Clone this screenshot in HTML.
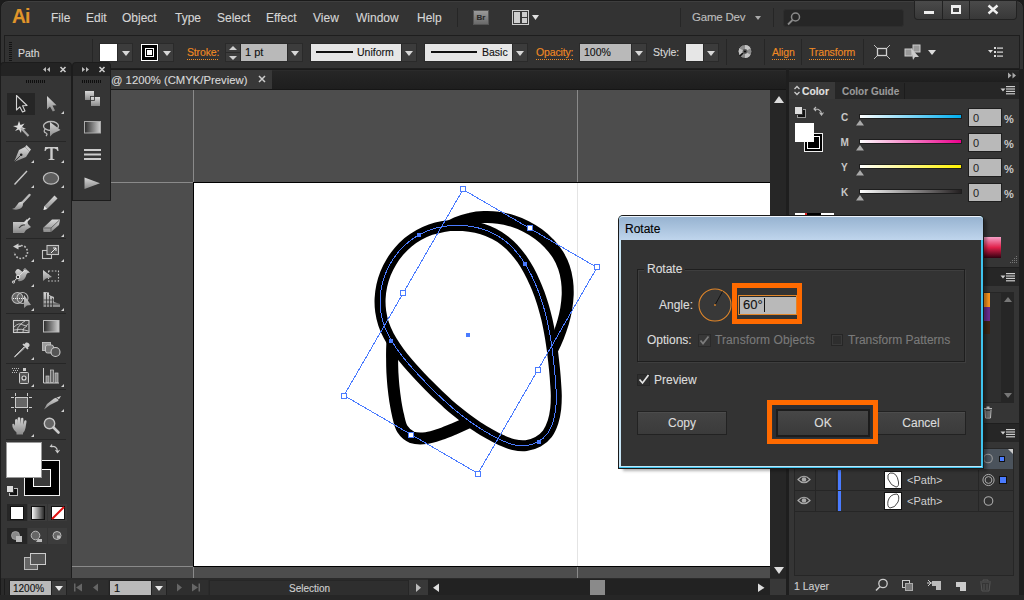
<!DOCTYPE html>
<html><head><meta charset="utf-8">
<style>
*{margin:0;padding:0;box-sizing:border-box}
html,body{width:1024px;height:600px;overflow:hidden;background:#1c1c1c;font-family:"Liberation Sans",sans-serif;-webkit-text-stroke-width:0.12px}
.a{position:absolute}
#win{position:absolute;left:0;top:0;width:1024px;height:600px;background:#333;border-radius:8px 8px 0 0;border:1px solid #1a1a1a;box-shadow:inset 0 1px 0 #3e3e3e}
.menu{color:#d6d6d6;font-size:12px;line-height:12px;top:12px;-webkit-text-stroke:0.12px #d6d6d6}
.ctl{position:absolute;left:4px;top:35px;width:1016px;height:34px;background:#323232;border:1px solid #1e1e1e;border-right-color:#1e1e1e}
.lbl{color:#d8d8d8;font-size:11px}
.olbl{color:#f08a24;font-size:10.5px;line-height:11px;letter-spacing:-0.15px;background:repeating-linear-gradient(90deg,#f08a24 0 1px,transparent 1px 2px) 0 100%/100% 1px no-repeat;padding-bottom:2px}
.sw{background:#f2f2f2}
.dd{background:#3a3a3a;border:1px solid #262626}
.tri{width:0;height:0;border-left:4px solid transparent;border-right:4px solid transparent;border-top:5px solid #d8d8d8}
.sep{width:1px;background:#262626}
</style></head>
<body>
<div id="win"></div>
<!-- Menu bar -->
<div class="a" style="left:12px;top:3px;color:#e0962a;font-weight:bold;font-size:21px;line-height:26px;letter-spacing:-1px;transform:scaleX(0.92);transform-origin:left">Ai</div>
<div class="a menu" style="left:51px">File</div>
<div class="a menu" style="left:86px">Edit</div>
<div class="a menu" style="left:122px">Object</div>
<div class="a menu" style="left:175px">Type</div>
<div class="a menu" style="left:217px">Select</div>
<div class="a menu" style="left:266px">Effect</div>
<div class="a menu" style="left:313px">View</div>
<div class="a menu" style="left:356px">Window</div>
<div class="a menu" style="left:417px">Help</div>
<div class="a sep" style="left:457px;top:8px;height:19px;background:#262626"></div>
<div class="a" style="left:473px;top:10px;width:16px;height:15px;background:linear-gradient(#9a9a9a,#6a6a6a);border:1px solid #555;color:#2a2a2a;font-size:8px;line-height:13px;text-align:center;font-weight:bold">Br</div>
<svg class="a" style="left:511px;top:9px" width="30" height="17">
 <rect x="1.5" y="1.5" width="16" height="14" fill="#3a3a3a" stroke="#cfcfcf" stroke-width="1"/>
 <rect x="3" y="3" width="6" height="11" fill="#cfcfcf"/>
 <rect x="11" y="3" width="5" height="5" fill="#cfcfcf"/>
 <rect x="11" y="9" width="5" height="5" fill="#cfcfcf"/>
 <path d="M21 6 L28 6 L24.5 11 Z" fill="#e0e0e0"/>
</svg>
<div class="a sep" style="left:680px;top:8px;height:19px;background:#262626"></div>
<div class="a" style="left:692px;top:12px;color:#bdbdbd;font-size:11.5px;line-height:11.5px;letter-spacing:-0.2px">Game Dev</div>
<div class="a tri" style="left:755px;top:16px;border-left-width:3px;border-right-width:3px;border-top-width:4px;border-top-color:#aaa"></div>
<div class="a sep" style="left:773px;top:8px;height:19px;background:#262626"></div>
<div class="a" style="left:783px;top:9px;width:121px;height:18px;background:#262626;border:1px solid #2e2e2e;border-radius:3px"></div>
<svg class="a" style="left:786px;top:11px" width="16" height="15"><circle cx="9.5" cy="6" r="4" fill="none" stroke="#8a8a8a" stroke-width="1.5"/><path d="M6.5 9 L2 13.5" stroke="#8a8a8a" stroke-width="1.8"/></svg>
<!-- window buttons -->
<div class="a" style="left:914px;top:0;width:103px;height:20px;background:#222;border-radius:0 0 4px 4px"></div>
<div class="a" style="left:915px;top:1px;width:27px;height:18px;background:linear-gradient(#4a4a4a,#383838);border-radius:0 0 0 3px"></div>
<div class="a" style="left:943px;top:1px;width:26px;height:18px;background:linear-gradient(#4a4a4a,#383838)"></div>
<div class="a" style="left:970px;top:1px;width:46px;height:18px;background:linear-gradient(#4a4a4a,#383838);border-radius:0 0 3px 0"></div>
<div class="a" style="left:924px;top:11px;width:10px;height:3px;background:#eee"></div>
<div class="a" style="left:951px;top:5px;width:10px;height:9px;border:2px solid #eee;border-top-width:3px"></div>
<svg class="a" style="left:987px;top:4px" width="12" height="11"><path d="M1.5 1.5 L10.5 9.5 M10.5 1.5 L1.5 9.5" stroke="#eee" stroke-width="2.4"/></svg>

<!-- Control bar -->
<div class="ctl"></div>
<div class="a" style="left:9px;top:42px;width:3px;height:20px;background:repeating-linear-gradient(#141414 0 1px,transparent 1px 2px)"></div>
<div class="a lbl" style="left:18px;top:47.5px;font-size:10.5px;line-height:10.5px">Path</div>
<div class="a" style="left:92px;top:39px;width:1px;height:26px;background:#262626"></div>
<div class="a" style="left:99px;top:43px;width:34px;height:19px;background:#2a2a2a"></div>
<div class="a" style="left:100px;top:44px;width:17px;height:17px;background:#fff"></div>
<div class="a" style="left:118px;top:44px;width:14px;height:17px;background:#3c3c3c"></div>
<div class="a tri" style="left:122px;top:51px"></div>
<div class="a" style="left:140px;top:43px;width:34px;height:19px;background:#2a2a2a"></div>
<div class="a" style="left:141px;top:44px;width:17px;height:17px;background:#000;border:1px solid #fff"></div>
<div class="a" style="left:145px;top:48px;width:9px;height:9px;border:1px solid #fff"></div>
<div class="a" style="left:147px;top:50px;width:5px;height:5px;background:#fff"></div>
<div class="a" style="left:159px;top:44px;width:14px;height:17px;background:#3c3c3c"></div>
<div class="a tri" style="left:163px;top:51px"></div>
<div class="a olbl" style="left:187px;top:47px">Stroke:</div>
<div class="a" style="left:225px;top:43px;width:78px;height:19px;background:#2a2a2a"></div>
<div class="a" style="left:226px;top:44px;width:14px;height:8px;background:#3c3c3c"></div>
<div class="a" style="left:226px;top:53px;width:14px;height:8px;background:#3c3c3c"></div>
<div class="a" style="left:229px;top:46px;width:0;height:0;border-left:4px solid transparent;border-right:4px solid transparent;border-bottom:4px solid #cfcfcf"></div>
<div class="a" style="left:229px;top:56px;width:0;height:0;border-left:4px solid transparent;border-right:4px solid transparent;border-top:4px solid #cfcfcf"></div>
<div class="a" style="left:241px;top:44px;width:46px;height:17px;background:#b9b9b9"></div>
<div class="a" style="left:245px;top:47px;font-size:11px;line-height:11px;color:#111">1 pt</div>
<div class="a" style="left:288px;top:44px;width:14px;height:17px;background:#3c3c3c"></div>
<div class="a tri" style="left:291px;top:51px"></div>
<div class="a" style="left:310px;top:43px;width:107px;height:19px;background:#2a2a2a"></div>
<div class="a" style="left:311px;top:44px;width:90px;height:17px;background:#e6e6e6"></div>
<div class="a" style="left:316px;top:51px;width:37px;height:2px;background:#111"></div>
<div class="a" style="left:357px;top:47px;font-size:10.5px;line-height:11px;color:#111">Uniform</div>
<div class="a" style="left:402px;top:44px;width:14px;height:17px;background:#3c3c3c"></div>
<div class="a tri" style="left:405px;top:51px"></div>
<div class="a" style="left:424px;top:43px;width:104px;height:19px;background:#2a2a2a"></div>
<div class="a" style="left:425px;top:44px;width:87px;height:17px;background:#e6e6e6"></div>
<div class="a" style="left:431px;top:51px;width:46px;height:2px;background:#111"></div>
<div class="a" style="left:482px;top:47px;font-size:10.5px;line-height:11px;color:#111">Basic</div>
<div class="a" style="left:513px;top:44px;width:14px;height:17px;background:#3c3c3c"></div>
<div class="a tri" style="left:516px;top:51px"></div>
<div class="a olbl" style="left:536px;top:47px">Opacity:</div>
<div class="a" style="left:579px;top:43px;width:68px;height:19px;background:#2a2a2a"></div>
<div class="a" style="left:580px;top:44px;width:51px;height:17px;background:#b9b9b9"></div>
<div class="a" style="left:584px;top:47px;font-size:10.5px;line-height:11px;color:#111">100%</div>
<div class="a" style="left:632px;top:44px;width:14px;height:17px;background:#3c3c3c"></div>
<div class="a tri" style="left:635px;top:51px"></div>
<div class="a lbl" style="left:653px;top:47px;font-size:10.5px;line-height:11px">Style:</div>
<div class="a" style="left:685px;top:43px;width:34px;height:19px;background:#2a2a2a"></div>
<div class="a" style="left:686px;top:44px;width:17px;height:17px;background:#e6e6e6"></div>
<div class="a" style="left:704px;top:44px;width:14px;height:17px;background:#3c3c3c"></div>
<div class="a tri" style="left:707px;top:51px"></div>
<div class="a" style="left:726px;top:39px;width:1px;height:26px;background:#262626"></div>
<svg class="a" style="left:737px;top:44px" width="16" height="16"><circle cx="8" cy="7.5" r="7" fill="#8c8c8c" stroke="#2a2a2a" stroke-width="1"/><path d="M8 7.5 L8 1 A6.5 6.5 0 0 1 13.6 4.3 Z M8 7.5 L13.6 10.7 A6.5 6.5 0 0 1 8 14 Z M8 7.5 L2.4 10.7 A6.5 6.5 0 0 1 2.4 4.3 Z" fill="#c4c4c4"/><circle cx="8" cy="7.5" r="2.4" fill="#555"/><circle cx="8" cy="7.5" r="1.1" fill="#111"/><path d="M3 12 L6 9" stroke="#111" stroke-width="1.6"/></svg>
<div class="a" style="left:764px;top:39px;width:1px;height:26px;background:#262626"></div>
<div class="a olbl" style="left:772px;top:47px">Align</div>
<div class="a" style="left:801px;top:39px;width:1px;height:26px;background:#262626"></div>
<div class="a olbl" style="left:809px;top:47px">Transform</div>
<div class="a" style="left:863px;top:39px;width:1px;height:26px;background:#262626"></div>
<svg class="a" style="left:873px;top:44px" width="18" height="16"><rect x="4.5" y="4.5" width="9" height="7" fill="none" stroke="#d0d0d0" stroke-width="1.3"/><path d="M1 1 L4 4 M17 1 L14 4 M1 15 L4 12 M17 15 L14 12" stroke="#bbb" stroke-width="1"/></svg>
<svg class="a" style="left:904px;top:44px" width="20" height="16"><rect x="1" y="5" width="7" height="7" fill="#999" stroke="#ccc" stroke-width="1"/><rect x="9" y="1" width="7" height="7" fill="#999" stroke="#ccc" stroke-width="1"/><path d="M7 4 L15 13 L11 13 L9 16 Z" fill="#ccc"/></svg>
<div class="a tri" style="left:928px;top:50px;border-top-color:#ddd;border-top-width:5px;border-left-width:4px;border-right-width:4px"></div>
<svg class="a" style="left:988px;top:47px" width="16" height="11"><path d="M0 3 L5 3 L2.5 6 Z" fill="#ddd"/><rect x="6" y="0" width="2" height="2" fill="#ddd"/><rect x="6" y="4" width="2" height="2" fill="#ddd"/><rect x="6" y="8" width="2" height="2" fill="#ddd"/><rect x="9" y="0.5" width="6" height="1.2" fill="#ddd"/><rect x="9" y="4.5" width="6" height="1.2" fill="#ddd"/><rect x="9" y="8.5" width="6" height="1.2" fill="#ddd"/></svg>

<!-- Tab bar -->
<div class="a" style="left:72px;top:69px;width:714px;height:21px;background:linear-gradient(#1a1a1a 0 1px,#2b2b2b 1px 2px,#262626 2px,#1e1e1e 20px,#161616 20px)"></div>
<div class="a" style="left:111px;top:70px;width:161px;height:19px;background:#383838"></div>
<div class="a" style="left:111px;top:75px;font-size:11.3px;line-height:11.3px;color:#d8d8d8;white-space:nowrap">@ 1200% (CMYK/Preview)</div>
<svg class="a" style="left:258px;top:75px" width="8" height="8"><path d="M1 1 L7 7 M7 1 L1 7" stroke="#ccc" stroke-width="1.5"/></svg>
<!-- Canvas -->
<div class="a" style="left:72px;top:90px;width:698px;height:489px;background:#4d4d4d"></div>
<div class="a" style="left:193px;top:90px;width:1px;height:92px;background:#8a8a8a"></div>
<div class="a" style="left:72px;top:182px;width:121px;height:1px;background:#8a8a8a"></div>
<div class="a" style="left:577px;top:90px;width:1px;height:92px;background:#8a8a8a"></div>
<div class="a" style="left:72px;top:566px;width:121px;height:1px;background:#8a8a8a"></div>
<div class="a" style="left:577px;top:567px;width:1px;height:12px;background:#8a8a8a"></div>
<div class="a" style="left:193px;top:567px;width:1px;height:12px;background:#8a8a8a"></div>
<div class="a" style="left:193px;top:182px;width:577px;height:385px;background:#000"></div>
<div class="a" style="left:194px;top:183px;width:576px;height:383px;background:#fff"></div>
<div class="a" style="left:577px;top:183px;width:1px;height:383px;background:#e4e4e4"></div>
<svg class="a" style="left:0;top:0" width="770" height="580">
<path d="M456.5 223.1C460.8 221.2 465.3 219.8 469.9 218.8C474.4 217.7 479.2 217.1 483.9 217.0C488.6 216.8 493.5 217.0 498.2 217.7C503.0 218.3 507.8 219.4 512.4 220.9C517.0 222.3 521.6 224.2 526.0 226.5C530.3 228.7 534.6 231.3 538.5 234.1C542.4 237.0 546.1 240.2 549.3 243.7C552.6 247.1 555.5 250.9 558.0 254.8C560.4 258.7 562.4 262.9 563.9 267.2C565.4 271.5 566.4 276.0 567.0 280.6C567.6 285.1 567.8 289.9 567.7 294.6C567.5 299.3 567.0 304.1 566.2 308.9C565.4 313.6 564.2 318.4 562.9 323.1C561.5 327.7 559.9 332.3 558.1 336.8C556.3 341.3 554.3 345.7 552.1 349.9C549.8 354.1 547.4 358.2 544.7 362.1C542.1 366.1 539.2 369.9 536.1 373.5C533.1 377.1 529.8 380.5 526.4 383.8C523.0 387.1 519.4 390.2 515.7 393.2C512.0 396.2 508.1 399.0 504.2 401.7C500.3 404.4 496.3 407.0 492.3 409.5C488.2 411.9 484.1 414.2 480.0 416.5C475.8 418.7 471.7 420.8 467.5 422.9C463.2 424.9 459.0 426.8 454.5 428.7C450.0 430.6 445.4 432.6 440.7 434.1C435.9 435.7 430.9 437.5 426.1 438.1C421.4 438.6 416.1 438.7 412.1 437.3C408.2 435.8 404.8 432.8 402.4 429.1C400.1 425.5 399.2 420.1 398.1 415.5C396.9 410.8 396.1 405.9 395.3 401.1C394.6 396.3 394.0 391.5 393.5 386.8C393.0 382.0 392.7 377.3 392.4 372.5C392.2 367.8 392.1 363.1 392.1 358.3C392.0 353.6 392.1 348.8 392.3 344.1C392.5 339.3 392.7 334.6 393.2 329.8C393.6 325.1 394.1 320.4 394.9 315.7C395.6 311.0 396.5 306.3 397.6 301.6C398.8 297.0 400.1 292.4 401.7 287.9C403.3 283.3 405.1 278.8 407.2 274.4C409.3 270.0 411.7 265.6 414.3 261.5C417.0 257.3 419.8 253.3 422.9 249.5C426.0 245.7 429.4 242.1 432.9 238.8C436.4 235.6 440.2 232.5 444.1 229.9C448.1 227.3 452.2 225.0 456.5 223.1Z" fill="#fff" stroke="#000" stroke-width="12"/>
<path d="M418.8 235.0C422.5 232.9 426.5 231.2 430.6 229.7C434.7 228.3 439.0 227.3 443.3 226.5C447.6 225.8 452.0 225.4 456.4 225.3C460.7 225.3 465.2 225.6 469.5 226.2C473.8 226.8 478.1 227.7 482.2 229.0C486.3 230.3 490.4 231.9 494.1 233.9C497.9 235.8 501.5 238.1 504.8 240.7C508.2 243.3 511.3 246.2 514.1 249.4C517.0 252.5 519.6 255.9 522.1 259.4C524.6 263.0 526.8 266.7 528.9 270.5C531.0 274.4 532.9 278.3 534.6 282.3C536.4 286.2 538.0 290.3 539.5 294.3C540.9 298.4 542.3 302.5 543.5 306.6C544.7 310.7 545.8 314.9 546.8 319.1C547.8 323.3 548.6 327.5 549.4 331.7C550.2 336.0 550.9 340.2 551.5 344.5C552.2 348.8 552.7 353.0 553.2 357.3C553.7 361.6 554.2 365.9 554.6 370.2C555.0 374.4 555.4 378.7 555.6 383.0C555.9 387.3 556.3 391.5 556.3 395.8C556.3 400.1 556.2 404.5 555.7 408.9C555.2 413.2 554.4 417.9 553.0 422.0C551.6 426.2 549.9 430.4 547.4 433.7C544.9 437.0 541.6 439.8 538.0 441.8C534.5 443.8 530.3 445.1 526.2 445.6C522.1 446.1 517.7 445.6 513.5 444.7C509.4 443.8 505.2 441.8 501.2 440.1C497.2 438.3 493.3 436.2 489.5 434.0C485.7 431.9 482.0 429.7 478.4 427.3C474.7 425.0 471.2 422.5 467.8 420.0C464.3 417.5 460.9 414.8 457.6 412.1C454.3 409.4 451.0 406.6 447.8 403.8C444.6 400.9 441.5 398.0 438.4 395.1C435.3 392.1 432.2 389.0 429.2 386.0C426.1 382.9 423.1 379.8 420.2 376.7C417.2 373.5 414.2 370.3 411.4 367.1C408.5 363.8 405.7 360.5 403.0 357.2C400.3 353.8 397.7 350.3 395.4 346.8C393.0 343.2 390.7 339.6 388.7 335.8C386.7 332.0 384.9 328.1 383.6 324.0C382.3 320.0 381.3 315.7 380.7 311.4C380.1 307.2 379.9 302.8 380.1 298.5C380.3 294.2 380.9 289.9 381.8 285.7C382.7 281.5 384.0 277.3 385.6 273.3C387.2 269.3 389.2 265.4 391.4 261.8C393.6 258.1 396.2 254.6 399.0 251.3C401.8 248.1 404.9 245.0 408.1 242.3C411.4 239.6 415.0 237.1 418.8 235.0Z" fill="#fff" stroke="#000" stroke-width="11"/>
<path d="M418.8 235.0C422.5 232.9 426.5 231.2 430.6 229.7C434.7 228.3 439.0 227.3 443.3 226.5C447.6 225.8 452.0 225.4 456.4 225.3C460.7 225.3 465.2 225.6 469.5 226.2C473.8 226.8 478.1 227.7 482.2 229.0C486.3 230.3 490.4 231.9 494.1 233.9C497.9 235.8 501.5 238.1 504.8 240.7C508.2 243.3 511.3 246.2 514.1 249.4C517.0 252.5 519.6 255.9 522.1 259.4C524.6 263.0 526.8 266.7 528.9 270.5C531.0 274.4 532.9 278.3 534.6 282.3C536.4 286.2 538.0 290.3 539.5 294.3C540.9 298.4 542.3 302.5 543.5 306.6C544.7 310.7 545.8 314.9 546.8 319.1C547.8 323.3 548.6 327.5 549.4 331.7C550.2 336.0 550.9 340.2 551.5 344.5C552.2 348.8 552.7 353.0 553.2 357.3C553.7 361.6 554.2 365.9 554.6 370.2C555.0 374.4 555.4 378.7 555.6 383.0C555.9 387.3 556.3 391.5 556.3 395.8C556.3 400.1 556.2 404.5 555.7 408.9C555.2 413.2 554.4 417.9 553.0 422.0C551.6 426.2 549.9 430.4 547.4 433.7C544.9 437.0 541.6 439.8 538.0 441.8C534.5 443.8 530.3 445.1 526.2 445.6C522.1 446.1 517.7 445.6 513.5 444.7C509.4 443.8 505.2 441.8 501.2 440.1C497.2 438.3 493.3 436.2 489.5 434.0C485.7 431.9 482.0 429.7 478.4 427.3C474.7 425.0 471.2 422.5 467.8 420.0C464.3 417.5 460.9 414.8 457.6 412.1C454.3 409.4 451.0 406.6 447.8 403.8C444.6 400.9 441.5 398.0 438.4 395.1C435.3 392.1 432.2 389.0 429.2 386.0C426.1 382.9 423.1 379.8 420.2 376.7C417.2 373.5 414.2 370.3 411.4 367.1C408.5 363.8 405.7 360.5 403.0 357.2C400.3 353.8 397.7 350.3 395.4 346.8C393.0 343.2 390.7 339.6 388.7 335.8C386.7 332.0 384.9 328.1 383.6 324.0C382.3 320.0 381.3 315.7 380.7 311.4C380.1 307.2 379.9 302.8 380.1 298.5C380.3 294.2 380.9 289.9 381.8 285.7C382.7 281.5 384.0 277.3 385.6 273.3C387.2 269.3 389.2 265.4 391.4 261.8C393.6 258.1 396.2 254.6 399.0 251.3C401.8 248.1 404.9 245.0 408.1 242.3C411.4 239.6 415.0 237.1 418.8 235.0Z" fill="none" stroke="#4a7bff" stroke-width="1" shape-rendering="crispEdges"/>
 <g fill="none" stroke="#4a7bff" stroke-width="1" shape-rendering="crispEdges">
  <path d="M463 189.5 L597 267.5 L478 473.5 L344 395.5 Z"/>
 </g>
 <g fill="#fff" stroke="#4a7bff" stroke-width="1" shape-rendering="crispEdges">
  <rect x="460.5" y="186.5" width="5" height="5"/>
  <rect x="594.5" y="264.5" width="5" height="5"/>
  <rect x="475.5" y="471.5" width="5" height="5"/>
  <rect x="341.5" y="393.5" width="5" height="5"/>
  <rect x="400.5" y="290.5" width="5" height="5"/>
  <rect x="535.5" y="367.5" width="5" height="5"/>
  <rect x="527.5" y="225.5" width="5" height="5"/>
  <rect x="408.5" y="432.5" width="5" height="5"/>
 </g>
 <g fill="#4a7bff" shape-rendering="crispEdges">
  <rect x="417" y="233" width="4" height="4"/>
  <rect x="523" y="262" width="4" height="4"/>
  <rect x="537" y="440" width="4" height="4"/>
  <rect x="389" y="339" width="4" height="4"/>
  <rect x="466" y="333" width="4" height="4"/>
 </g>
</svg>
<!-- v scrollbar -->
<div class="a" style="left:770px;top:90px;width:17px;height:489px;background:#262626"></div>
<div class="a" style="left:774px;top:96px;width:0;height:0;border-left:5px solid transparent;border-right:5px solid transparent;border-bottom:7px solid #ddd"></div>
<div class="a" style="left:774px;top:567px;width:0;height:0;border-left:5px solid transparent;border-right:5px solid transparent;border-top:7px solid #ddd"></div>

<!-- Right dock -->
<div class="a" style="left:786px;top:69px;width:238px;height:531px;background:#1e1e1e"></div>
<div class="a" style="left:789px;top:69px;width:230px;height:13px;background:linear-gradient(#1a1a1a 0 1px,#2b2b2b 1px 2px,#262626 2px,#1e1e1e)"></div>
<svg class="a" style="left:1007px;top:72px" width="10" height="7"><path d="M1 0.5 L4.5 3.5 L1 6.5 Z M5.5 0.5 L9 3.5 L5.5 6.5 Z" fill="#aaa"/></svg>
<!-- Color panel -->
<div class="a" style="left:789px;top:82px;width:230px;height:17px;background:#262626"></div>
<div class="a" style="left:789px;top:82px;width:46px;height:17px;background:#383838"></div>
<div class="a" style="left:835px;top:83px;width:70px;height:16px;background:#262626;border-right:1px solid #1c1c1c"></div>
<svg class="a" style="left:793px;top:85px" width="8" height="11"><path d="M1.5 4 L4 1.5 L6.5 4 M1.5 7 L4 9.5 L6.5 7" stroke="#ccc" stroke-width="1.3" fill="none"/></svg>
<div class="a" style="left:802px;top:86px;font-size:10.3px;line-height:11px;font-weight:bold;color:#e0e0e0">Color</div>
<div class="a" style="left:842px;top:86px;font-size:10px;line-height:11px;font-weight:bold;color:#9a9a9a">Color Guide</div>
<svg class="a" style="left:1000px;top:86px" width="16" height="9"><path d="M0.5 2.5 L5.5 2.5 L3 5.5 Z" fill="#ccc"/><rect x="6" y="0" width="9" height="1.2" fill="#ccc"/><rect x="6" y="2.4" width="9" height="1.2" fill="#ccc"/><rect x="6" y="4.8" width="9" height="1.2" fill="#ccc"/><rect x="6" y="7.2" width="9" height="1.2" fill="#ccc"/></svg>
<div class="a" style="left:789px;top:99px;width:230px;height:168px;background:#353535"></div>
<svg class="a" style="left:789px;top:99px" width="230" height="170">
 <defs>
  <linearGradient id="cC"><stop offset="0" stop-color="#fff"/><stop offset="1" stop-color="#00aeef"/></linearGradient>
  <linearGradient id="cM"><stop offset="0" stop-color="#fff"/><stop offset="1" stop-color="#ec008c"/></linearGradient>
  <linearGradient id="cY"><stop offset="0" stop-color="#fff"/><stop offset="1" stop-color="#fff200"/></linearGradient>
  <linearGradient id="cK"><stop offset="0" stop-color="#fff"/><stop offset="1" stop-color="#231f20"/></linearGradient>
  <linearGradient id="spec" x1="0" y1="0" x2="0" y2="1"><stop offset="0" stop-color="#f7a0c8"/><stop offset="0.5" stop-color="#e0204a"/><stop offset="1" stop-color="#300010"/></linearGradient>
 </defs>
 <!-- small default fill/stroke + swap -->
 <rect x="8.5" y="10.5" width="8" height="8" fill="#111" stroke="#999" stroke-width="1"/>
 <rect x="5.5" y="7.5" width="8" height="8" fill="#ddd" stroke="#333" stroke-width="1"/>
 <path d="M27 8 L25 10 L27 12 M25.2 10 Q32 9.5 32.5 15 M30.5 13.5 L32.5 16 L34.5 13.5" stroke="#bbb" stroke-width="1.1" fill="none"/>
 <!-- fill/stroke -->
 <rect x="15.5" y="34.5" width="18" height="18" fill="#000" stroke="#eee" stroke-width="1"/>
 <rect x="18.5" y="37.5" width="12" height="12" fill="none" stroke="#fff" stroke-width="1"/>
 <rect x="6" y="24" width="19" height="19" fill="#fff"/>
 <g font-family="Liberation Sans" font-size="10" font-weight="bold" fill="#c8c8c8">
  <text x="52" y="22">C</text><text x="51.5" y="47">M</text><text x="52" y="72">Y</text><text x="52" y="97">K</text>
 </g>
 <rect x="70" y="15" width="103" height="5" fill="#1e1e1e"/>
 <rect x="71" y="16" width="101" height="3" fill="url(#cC)"/>
 <rect x="70" y="40" width="103" height="5" fill="#1e1e1e"/>
 <rect x="71" y="41" width="101" height="3" fill="url(#cM)"/>
 <rect x="70" y="65" width="103" height="5" fill="#1e1e1e"/>
 <rect x="71" y="66" width="101" height="3" fill="url(#cY)"/>
 <rect x="70" y="90" width="103" height="5" fill="#1e1e1e"/>
 <rect x="71" y="91" width="101" height="3" fill="url(#cK)"/>
 <g fill="#aaa"><path d="M67 26.5 L71 21 L75 26.5 Z"/><path d="M67 51.5 L71 46 L75 51.5 Z"/><path d="M67 76.5 L71 71 L75 76.5 Z"/><path d="M67 101.5 L71 96 L75 101.5 Z"/></g>
 <g fill="#b9b9b9" stroke="#1e1e1e" stroke-width="1">
  <rect x="179.5" y="9.5" width="33" height="18"/><rect x="179.5" y="34.5" width="33" height="18"/>
  <rect x="179.5" y="59.5" width="33" height="18"/><rect x="179.5" y="84.5" width="33" height="18"/>
 </g>
 <g font-family="Liberation Sans" font-size="11" fill="#222">
  <text x="184" y="23">0</text><text x="184" y="48">0</text><text x="184" y="73">0</text><text x="184" y="98">0</text>
 </g>
 <g font-family="Liberation Sans" font-size="11" font-weight="bold" fill="#c8c8c8">
  <text x="215" y="24">%</text><text x="215" y="49">%</text><text x="215" y="74">%</text><text x="215" y="99">%</text>
 </g>
 <rect x="6" y="114" width="12" height="3" fill="#fff"/><rect x="18" y="114" width="14" height="3" fill="#000"/><rect x="32" y="114" width="13" height="3" fill="#fff"/><rect x="16" y="114" width="2" height="2" fill="#e02020"/>
 <rect x="194" y="138" width="18" height="21" fill="url(#spec)"/>
 <g fill="#777"><rect x="227" y="157" width="1" height="1"/><rect x="225" y="159" width="1" height="1"/><rect x="227" y="159" width="1" height="1"/><rect x="223" y="161" width="1" height="1"/><rect x="225" y="161" width="1" height="1"/><rect x="227" y="161" width="1" height="1"/><rect x="221" y="163" width="1" height="1"/><rect x="223" y="163" width="1" height="1"/><rect x="225" y="163" width="1" height="1"/><rect x="227" y="163" width="1" height="1"/></g>
</svg>
<!-- Swatches panel -->
<div class="a" style="left:789px;top:268px;width:230px;height:18px;background:#262626"></div>
<svg class="a" style="left:1000px;top:273px" width="16" height="9"><path d="M0.5 2.5 L5.5 2.5 L3 5.5 Z" fill="#ccc"/><rect x="6" y="0" width="9" height="1.2" fill="#ccc"/><rect x="6" y="2.4" width="9" height="1.2" fill="#ccc"/><rect x="6" y="4.8" width="9" height="1.2" fill="#ccc"/><rect x="6" y="7.2" width="9" height="1.2" fill="#ccc"/></svg>
<div class="a" style="left:789px;top:286px;width:230px;height:137px;background:#353535"></div>
<div class="a" style="left:794px;top:292px;width:220px;height:111px;background:#2e2e2e;border:1px solid #262626"></div>
<div class="a" style="left:984px;top:293px;width:6px;height:14px;background:#f7941d"></div>
<div class="a" style="left:984px;top:307px;width:6px;height:14px;background:#6a2c91"></div>
<div class="a" style="left:984px;top:321px;width:6px;height:13px;background:#3c2415"></div>
<div class="a" style="left:1001px;top:293px;width:12px;height:109px;background:#262626"></div>
<div class="a" style="left:1004px;top:297px;width:0;height:0;border-left:4px solid transparent;border-right:4px solid transparent;border-bottom:5px solid #777"></div>
<div class="a" style="left:1004px;top:393px;width:0;height:0;border-left:4px solid transparent;border-right:4px solid transparent;border-top:5px solid #777"></div>
<svg class="a" style="left:983px;top:406px" width="10" height="13"><rect x="1" y="2" width="8" height="1.3" fill="#bbb"/><rect x="3.5" y="0.5" width="3" height="1.5" fill="#bbb"/><path d="M2 4 L2.5 12 L7.5 12 L8 4" fill="none" stroke="#bbb" stroke-width="1"/><path d="M4 5 L4 11 M6 5 L6 11" stroke="#bbb" stroke-width="0.8"/></svg>
<!-- Layers panel -->
<div class="a" style="left:789px;top:424px;width:230px;height:18px;background:#262626"></div>
<svg class="a" style="left:1000px;top:429px" width="16" height="9"><path d="M0.5 2.5 L5.5 2.5 L3 5.5 Z" fill="#ccc"/><rect x="6" y="0" width="9" height="1.2" fill="#ccc"/><rect x="6" y="2.4" width="9" height="1.2" fill="#ccc"/><rect x="6" y="4.8" width="9" height="1.2" fill="#ccc"/><rect x="6" y="7.2" width="9" height="1.2" fill="#ccc"/></svg>
<div class="a" style="left:789px;top:442px;width:230px;height:153px;background:#353535"></div>
<div class="a" style="left:794px;top:448px;width:220px;height:128px;background:#323232;border:1px solid #262626"></div>
<div class="a" style="left:795px;top:449px;width:218px;height:20px;background:#4b535c"></div>
<div class="a" style="left:1008px;top:449px;width:0;height:0;border-left:5px solid transparent;border-top:5px solid #ccc"></div>
<svg class="a" style="left:794px;top:448px" width="222" height="130">
 <g fill="none" stroke="#262626" stroke-width="1">
  <path d="M1 42.5 L219 42.5 M1 63.5 L219 63.5"/>
  <path d="M21.5 22 L21.5 63 M42.5 22 L42.5 63 M184.5 22 L184.5 63"/>
 </g>
 <circle cx="194" cy="10.5" r="4.3" fill="none" stroke="#999" stroke-width="1.1"/>
 <rect x="205.5" y="8.5" width="5" height="5" fill="#4a7bff" stroke="#111" stroke-width="1"/>
 <rect x="44" y="22" width="3" height="20" fill="#4a7bff"/>
 <rect x="44" y="43" width="3" height="20" fill="#4a7bff"/>
 <g fill="none" stroke="#aaa" stroke-width="1.2">
  <path d="M4 31.5 Q10 25 16 31.5 Q10 38 4 31.5 Z"/><path d="M4 52.5 Q10 46 16 52.5 Q10 59 4 52.5 Z"/>
 </g>
 <circle cx="10" cy="31.5" r="2.3" fill="#aaa"/><circle cx="10" cy="52.5" r="2.3" fill="#aaa"/>
 <rect x="90.5" y="23.5" width="17" height="17" fill="#fff" stroke="#111" stroke-width="1"/>
 <rect x="90.5" y="44.5" width="17" height="17" fill="#fff" stroke="#111" stroke-width="1"/>
 <path d="M96 25 Q103 24 104.5 34 Q105 39 102 39 Q97 38 94 31 Q93 26 96 25 Z" fill="none" stroke="#333" stroke-width="0.9"/>
 <path d="M103 46 Q106 48 104 54 Q101 60 96 60 Q93 59 94 53 Q96 46 103 46 Z" fill="none" stroke="#333" stroke-width="0.9"/>
 <g font-family="Liberation Sans" font-size="11" fill="#d0d0d0"><text x="113" y="35.5">&lt;Path&gt;</text><text x="113" y="56.5">&lt;Path&gt;</text></g>
 <circle cx="194.5" cy="32" r="5.6" fill="none" stroke="#aaa" stroke-width="1"/>
 <circle cx="194.5" cy="32" r="3.4" fill="none" stroke="#aaa" stroke-width="1"/>
 <rect x="205.5" y="28.5" width="7" height="7" fill="#4a7bff" stroke="#111" stroke-width="1"/>
 <circle cx="194.5" cy="53" r="4.3" fill="none" stroke="#aaa" stroke-width="1.1"/>
</svg>
<div class="a" style="left:794px;top:581px;font-size:10.5px;line-height:10.5px;color:#d0d0d0">1 Layer</div>
<svg class="a" style="left:874px;top:578px" width="120" height="15">
 <circle cx="9" cy="5.5" r="4.2" fill="none" stroke="#ccc" stroke-width="1.3"/><path d="M6 8.5 L2 12.5" stroke="#ccc" stroke-width="1.6"/>
 <rect x="28.5" y="2.5" width="7" height="7" fill="none" stroke="#ccc" stroke-width="1"/><rect x="31.5" y="5.5" width="7" height="7" fill="#777" stroke="#aaa" stroke-width="1"/>
 <path d="M54 2 L57 5 L54 8 M53 5 L60 5" stroke="#ccc" stroke-width="1" fill="none"/><path d="M58 3 L67 3 L67 12 L62 12 L62 8 L58 8 Z" fill="#bbb"/>
 <path d="M82 4 L92 4 L92 13 L86 13 L86 9 L82 9 Z" fill="#ccc"/>
 <g stroke="#555" fill="none" stroke-width="1"><path d="M106 4 L117 4 M109 3 L109 2 L114 2 L114 3 M107 5 L108 13 L115 13 L116 5 M110 6 L110 12 M113 6 L113 12"/></g>
</svg>

<!-- Tools panel -->
<div class="a" style="left:0;top:62px;width:72px;height:517px;background:#1c1c1c;border-radius:4px 4px 0 0"></div>
<div class="a" style="left:1px;top:63px;width:70px;height:13px;background:#232323;border-radius:3px 3px 0 0"></div>
<div class="a" style="left:1px;top:76px;width:70px;height:502px;background:#353535"></div>
<div class="a" style="left:72px;top:62px;width:39px;height:139px;background:#1c1c1c;border-radius:4px 4px 0 0"></div>
<div class="a" style="left:73px;top:63px;width:37px;height:13px;background:#232323;border-radius:3px 3px 0 0"></div>
<div class="a" style="left:73px;top:76px;width:37px;height:124px;background:#353535"></div>
<div class="a" style="left:7px;top:93px;width:28px;height:22px;background:#262626"></div>
<svg class="a" style="left:0;top:0" width="115" height="580">
 <defs>
  <linearGradient id="ig" x1="0" y1="0" x2="0" y2="1"><stop offset="0" stop-color="#d8d8d8"/><stop offset="1" stop-color="#8a8a8a"/></linearGradient>
  <linearGradient id="gr" x1="0" y1="0" x2="1" y2="0"><stop offset="0" stop-color="#2a2a2a"/><stop offset="1" stop-color="#d0d0d0"/></linearGradient>
  <linearGradient id="gr2" x1="0" y1="0" x2="1" y2="0"><stop offset="0" stop-color="#222"/><stop offset="1" stop-color="#fff"/></linearGradient>
 </defs>
 <!-- header icons -->
 <path d="M46 67 L43 69.5 L46 72 Z M50 67 L47 69.5 L50 72 Z" fill="#bbb"/>
 <path d="M60.5 67 L65.5 72 M65.5 67 L60.5 72" stroke="#ccc" stroke-width="1.6"/>
 <path d="M82 67 L85 69.5 L82 72 Z M86 67 L89 69.5 L86 72 Z" fill="#bbb"/>
 <path d="M99.5 67 L104.5 72 M104.5 67 L99.5 72" stroke="#ccc" stroke-width="1.6"/>
 <!-- grips -->
 <g fill="#111">
  <rect x="26" y="80" width="19" height="3" fill="url(#grip)"/>
 </g>
 <pattern id="gp" width="2" height="3" patternUnits="userSpaceOnUse"><rect width="1" height="3" fill="#0e0e0e"/></pattern>
 <rect x="26" y="80" width="19" height="3" fill="url(#gp)"/>
 <rect x="82" y="80" width="19" height="3" fill="url(#gp)"/>
 <!-- separators -->
 <g fill="#262626">
  <rect x="6" y="141" width="60" height="1"/><rect x="6" y="238" width="60" height="1"/>
  <rect x="6" y="313" width="60" height="1"/><rect x="6" y="363" width="60" height="1"/>
  <rect x="6" y="389" width="60" height="1"/><rect x="6" y="439" width="60" height="1"/>
 </g>
 <!-- small corner triangles -->
 <g fill="#d0d0d0">
  <path d="M64 111 L64 114 L61 114 Z"/>
  <path d="M34 160 L34 163 L31 163 Z"/><path d="M64 160 L64 163 L61 163 Z"/>
  <path d="M34 185 L34 188 L31 188 Z"/><path d="M64 185 L64 188 L61 188 Z"/>
  <path d="M64 210 L64 213 L61 213 Z"/><path d="M64 234 L64 237 L61 237 Z"/>
  <path d="M34 259 L34 262 L31 262 Z"/><path d="M64 259 L64 262 L61 262 Z"/>
  <path d="M34 284 L34 287 L31 287 Z"/><path d="M34 308 L34 311 L31 311 Z"/><path d="M64 308 L64 311 L61 311 Z"/>
  <path d="M34 357 L34 360 L31 360 Z"/>
  <path d="M34 384 L34 387 L31 387 Z"/><path d="M64 384 L64 387 L61 387 Z"/>
  <path d="M64 409 L64 412 L61 412 Z"/><path d="M34 434 L34 437 L31 437 Z"/>
 </g>
 <!-- selection (outline arrow) -->
 <path d="M16.5 95.5 L16.5 110 L19.8 106.8 L22.5 112 L25 111 L22.6 105.8 L27 105.5 Z" fill="#262626" stroke="#d4d4d4" stroke-width="1.1" stroke-linejoin="round"/>
 <!-- direct selection -->
 <path d="M47 96 L47 109.5 L50 106.5 L52.8 111.5 L55 110.5 L52.5 105.5 L56.5 105.2 Z" fill="url(#ig)"/>
 <!-- magic wand -->
 <path d="M19 121 L20.5 125 L24.5 123.5 L22 127 L26 129 L21.5 129.5 L21 133 L19 129.5 L15 131 L17.5 128 L13 126 L17.5 125.5 Z" fill="#ddd"/>
 <path d="M21 128 L28.5 136" stroke="#aaa" stroke-width="2"/>
 <!-- lasso -->
 <ellipse cx="51" cy="126" rx="7.5" ry="4.5" fill="none" stroke="#bbb" stroke-width="1.3"/>
 <path d="M45 129 Q43 132 46 133 Q48 134 46 136" fill="none" stroke="#bbb" stroke-width="1.2"/>
 <path d="M50 122 L50 136.5 L53 133.5 L60.5 130 Z" fill="url(#ig)"/>
 <!-- pen -->
 <path d="M25 147 L29.5 151.5 L26 157 L14 162 L19 150 Z" fill="url(#ig)"/>
 <path d="M26.5 145 L31 149.5 L29.5 151.5 L25 147 Z" fill="#ccc"/>
 <path d="M14 162 L20.5 155.5" stroke="#333" stroke-width="0.9"/>
 <circle cx="21.2" cy="154.8" r="1.3" fill="#222"/>
 <!-- T -->
 <path d="M45 147 L58 147 L58.5 151 L57.5 151 Q57 148.5 54.5 148.5 L52.7 148.5 L52.7 158.8 L54.5 159.2 L54.5 160 L48.5 160 L48.5 159.2 L50.3 158.8 L50.3 148.5 L48.5 148.5 Q46 148.5 45.5 151 L44.5 151 Z" fill="#ccc"/>
 <!-- line -->
 <path d="M14.5 184.5 L27 171" stroke="#c8c8c8" stroke-width="1.4"/>
 <!-- ellipse -->
 <ellipse cx="51" cy="178.3" rx="7.6" ry="5.8" fill="#5e5e5e" stroke="#c0c0c0" stroke-width="1.2"/>
 <!-- brush -->
 <path d="M29.5 195 L22 203" stroke="#bbb" stroke-width="2.4" stroke-linecap="round"/>
 <path d="M22.5 202 Q19 201 17 205 Q15.5 208 12 209 Q17 210.5 20.5 208.5 Q24 206 22.5 202 Z" fill="url(#ig)"/>
 <!-- pencil -->
 <path d="M54.5 195.5 L57.5 198.5 L47 209 L43.5 210 L44.5 206 Z" fill="url(#ig)"/>
 <path d="M43.5 210 L44.5 206 L47 209 Z" fill="#eee"/>
 <!-- blob brush -->
 <path d="M13 222 L24 222 L27 219 L28 224 L31 227 L26 230 L24 233 L13 233 Z" fill="url(#ig)"/>
 <path d="M30 218 L23 225" stroke="#ddd" stroke-width="1.6"/>
 <path d="M19 228 Q22 224 25 225" stroke="#444" stroke-width="1.2" fill="none"/>
 <!-- eraser -->
 <path d="M43 228 L52 219.5 L60 219.5 L59 225 L51 232 L43.5 232 Z" fill="url(#ig)"/>
 <path d="M43 228 L51 228 L59.5 220 M51 228 L51 232" stroke="#555" stroke-width="0.8" fill="none"/>
 <!-- rotate -->
 <path d="M21 245.5 A6.5 6.5 0 1 1 14.5 252" fill="none" stroke="#bbb" stroke-width="1.6" stroke-dasharray="1.8 1.5"/>
 <path d="M13 246.5 L18.5 243.5 L18.5 249.5 Z" fill="#ccc"/><path d="M18 246.5 L21 246" stroke="#ccc" stroke-width="1.4"/>
 <!-- scale -->
 <rect x="42.5" y="250.5" width="9" height="8" fill="none" stroke="#c4c4c4" stroke-width="1.1"/>
 <rect x="47" y="245.5" width="11.5" height="9" fill="#555" stroke="#c4c4c4" stroke-width="1.1"/>
 <path d="M51 253 L56 248 M53 248 L56 248 L56 251" stroke="#eee" stroke-width="1" fill="none"/>
 <!-- warp/puppet -->
 <path d="M15 272 Q17 267 20 270 Q23 273 24 271 Q27 268 30 273 Q27 272 26 276 Q24 282 18 281 Q20 277 17 276 Z" fill="url(#ig)"/>
 <path d="M13 282.5 L18 277 L25 270" stroke="#ddd" stroke-width="1" fill="none"/>
 <circle cx="18" cy="277" r="1.8" fill="#333" stroke="#eee" stroke-width="1"/>
 <circle cx="13.5" cy="282" r="1.2" fill="none" stroke="#ddd" stroke-width="0.8"/>
 <circle cx="25" cy="270" r="1.2" fill="none" stroke="#ddd" stroke-width="0.8"/>
 <!-- free transform -->
 <rect x="48.5" y="271" width="10" height="10" fill="none" stroke="#c4c4c4" stroke-width="1.1" stroke-dasharray="1.6 1.6"/>
 <path d="M43 270 L43 281 L46 278.5 L52 277 Z" fill="url(#ig)"/>
 <!-- shape builder -->
 <circle cx="17.5" cy="298" r="5.5" fill="#666" stroke="#bbb" stroke-width="1.1"/>
 <circle cx="22.5" cy="298" r="5.5" fill="none" stroke="#bbb" stroke-width="1.1"/>
 <path d="M13 298.5 L25 298.5" stroke="#eee" stroke-width="1" stroke-dasharray="1 1"/>
 <path d="M24 295 L24 308 L27 305.5 L31 305 Z" fill="url(#ig)"/>
 <!-- perspective grid -->
 <path d="M43.5 292 L43.5 307 L60 307 L60 304 L54 302 L54 297 L49 295 L49 292.5 Z" fill="url(#ig)"/>
 <path d="M46.5 293 L46.5 307 M49.5 296 L49.5 307 M52.5 298 L52.5 307 M43.5 300 L54 300 M43.5 304 L60 304" stroke="#333" stroke-width="0.8"/>
 <!-- mesh -->
 <rect x="13.5" y="320.5" width="15.5" height="12" fill="#444" stroke="#ccc" stroke-width="1.1"/>
 <path d="M14 327 Q19 322 23 325 Q26 327 28.5 324 M17 332 Q17 327 21 324 Q23 322 25 321 M14 330 Q21 328 28.5 331 M23 332 Q22 328 27 326" stroke="#ccc" stroke-width="0.9" fill="none"/>
 <!-- gradient -->
 <rect x="43.5" y="320.5" width="15.5" height="11.5" fill="url(#gr)" stroke="#bbb" stroke-width="1"/>
 <!-- eyedropper -->
 <path d="M27 342.5 Q30 343 29.5 346 L27 348.5 L23.5 345 L26 342.5 Z" fill="#ccc"/>
 <path d="M23 344 L28 349" stroke="#ccc" stroke-width="1.6"/>
 <path d="M24 347 L16 355 L14.5 357 L16.5 355.5 L24.5 348 Z" fill="#777" stroke="#ccc" stroke-width="0.9"/>
 <!-- blend -->
 <rect x="42.5" y="342.5" width="8" height="8" fill="#9a9a9a" stroke="#ccc" stroke-width="0.8"/>
 <rect x="45.5" y="345" width="8" height="8" rx="2" fill="#777" stroke="#ccc" stroke-width="0.9"/>
 <circle cx="55.5" cy="352" r="4.5" fill="#555" stroke="#ccc" stroke-width="1.1"/>
 <!-- symbol sprayer -->
 <g fill="#bbb"><rect x="12" y="368" width="1" height="1"/><rect x="14" y="368" width="1" height="1"/><rect x="16" y="368" width="1" height="1"/><rect x="18" y="368" width="1" height="1"/><rect x="13" y="370" width="1" height="1"/><rect x="15" y="370" width="1" height="1"/><rect x="17" y="370" width="1" height="1"/><rect x="12" y="372" width="1" height="1"/><rect x="14" y="372" width="1" height="1"/><rect x="16" y="372" width="1" height="1"/></g>
 <rect x="23" y="368" width="3" height="3" fill="#ccc"/>
 <rect x="19.5" y="372.5" width="9" height="11" rx="1" fill="#555" stroke="#ccc" stroke-width="1"/>
 <circle cx="24" cy="378" r="2" fill="#333" stroke="#ddd" stroke-width="1.1"/>
 <!-- column graph -->
 <path d="M43.5 368 L43.5 383 L59 383" stroke="#ccc" stroke-width="1" fill="none"/>
 <rect x="46" y="376" width="3" height="6.5" fill="#888" stroke="#ccc" stroke-width="0.7"/>
 <rect x="50.5" y="370" width="3" height="12.5" fill="#666" stroke="#ccc" stroke-width="0.7"/>
 <rect x="55" y="373" width="3" height="9.5" fill="#888" stroke="#ccc" stroke-width="0.7"/>
 <!-- artboard -->
 <rect x="15.5" y="397.5" width="12" height="10" fill="#666" stroke="#ccc" stroke-width="1"/>
 <path d="M11 397.5 L14 397.5 M29 397.5 L32 397.5 M11 407.5 L14 407.5 M29 407.5 L32 407.5 M15.5 393 L15.5 396 M27.5 393 L27.5 396 M15.5 409 L15.5 412 M27.5 409 L27.5 412" stroke="#ccc" stroke-width="1"/>
 <!-- slice -->
 <path d="M61 396 L58 401 L50 405 L44 409.5 L47 404 L54 398.5 Z" fill="url(#ig)"/>
 <path d="M56 397.5 L60 400.5" stroke="#333" stroke-width="0.8"/>
 <!-- hand -->
 <path d="M15 426 L15 420.5 Q15 419 16.3 419 Q17.5 419 17.5 420.5 L17.5 424 L17.7 418.5 Q17.7 417.2 19 417.2 Q20.3 417.2 20.3 418.5 L20.5 424 L21 419 Q21 417.8 22.2 417.8 Q23.4 417.8 23.4 419 L23.4 425 L24.3 421 Q24.6 420 25.7 420.2 Q26.8 420.5 26.5 421.8 L25.5 428 Q25 431 23 433 L23 434.5 L16.5 434.5 L16.5 432.5 Q13.5 430 12.5 427 L12.3 424.5 Q12.5 423.5 13.5 423.7 Q14.7 424 15 426 Z" fill="url(#ig)"/>
 <!-- zoom -->
 <circle cx="49.5" cy="423.5" r="5.2" fill="#666" stroke="#c8c8c8" stroke-width="1.4"/>
 <path d="M53.5 427.5 L58.5 432.5" stroke="#ccc" stroke-width="2.6" stroke-linecap="round"/>
 <!-- fill/stroke -->
 <rect x="24.5" y="460.5" width="35" height="35" fill="#000" stroke="#eee" stroke-width="1"/>
 <rect x="33.5" y="469.5" width="17" height="17" fill="#3a3a3a" stroke="#fff" stroke-width="1"/>
 <rect x="6.5" y="442.5" width="35" height="35" fill="#fff" stroke="#9a9a9a" stroke-width="1"/>
 <path d="M52 444.5 L50.5 446.5 L52.5 447 M51 446.5 Q57 445.5 57.5 451.5 M55.5 450 L57.5 452.5 L59.5 450" stroke="#ccc" stroke-width="1.1" fill="none"/>
 <rect x="9.5" y="488.5" width="8" height="7" fill="#111" stroke="#bbb" stroke-width="1"/>
 <rect x="6.5" y="485.5" width="7" height="7" fill="#ddd" stroke="#333" stroke-width="1"/>
 <!-- color mode buttons -->
 <rect x="7" y="504" width="20" height="17" fill="#262626"/>
 <rect x="28" y="504" width="19" height="17" fill="#3c3c3c"/>
 <rect x="48" y="504" width="19" height="17" fill="#3c3c3c"/>
 <rect x="10.5" y="506.5" width="13" height="13" fill="#fff" stroke="#111" stroke-width="1"/>
 <rect x="31.5" y="506.5" width="13" height="13" fill="url(#gr2)" stroke="#111" stroke-width="1" transform="scale(-1,1) translate(-76,0)"/>
 <rect x="51.5" y="506.5" width="13" height="13" fill="#fff" stroke="#111" stroke-width="1"/>
 <path d="M52 519 L64 507" stroke="#e01010" stroke-width="2"/>
 <!-- draw modes -->
 <rect x="7" y="528" width="20" height="16" fill="#262626"/>
 <rect x="28" y="528" width="19" height="16" fill="#3c3c3c"/>
 <rect x="48" y="528" width="19" height="16" fill="#3c3c3c"/>
 <circle cx="15.5" cy="535.5" r="4" fill="#888" stroke="#aaa" stroke-width="0.8"/>
 <rect x="16" y="536" width="6" height="6" fill="#bbb"/>
 <circle cx="35.5" cy="535.5" r="4.3" fill="#666" stroke="#bbb" stroke-width="1"/>
 <path d="M38 539 L42 539 L42 542 L36 542 Z" fill="#bbb"/>
 <circle cx="57" cy="535.5" r="4" fill="#666" stroke="#bbb" stroke-width="1"/>
 <rect x="57" y="535.5" width="3" height="3" fill="#bbb"/>
 <!-- screen mode -->
 <rect x="24.5" y="557.5" width="13" height="12" fill="#666" stroke="#bbb" stroke-width="1"/>
 <rect x="30.5" y="553.5" width="15" height="11" fill="#555" stroke="#ccc" stroke-width="1"/>
 <!-- panel 2 icons -->
 <rect x="85" y="91" width="9" height="9" fill="url(#ig)"/>
 <rect x="91" y="97" width="9" height="9" fill="url(#ig)"/>
 <rect x="90.5" y="96.5" width="4" height="4" fill="none" stroke="#333" stroke-width="0.8"/>
 <rect x="84.5" y="121.5" width="16" height="11.5" fill="url(#gr)" stroke="#aaa" stroke-width="1"/>
 <rect x="84" y="149" width="17" height="2" fill="#ccc"/>
 <rect x="84" y="153.5" width="17" height="2" fill="#ccc"/>
 <rect x="84" y="158" width="17" height="2" fill="#ccc"/>
 <path d="M84.5 177.5 L84.5 189 L100 183.3 Z" fill="url(#ig)"/>
</svg>

<!-- Dialog -->
<div class="a" style="left:618px;top:215px;width:366px;height:254px;background:#1a1a1a;border-radius:5px 5px 0 0;box-shadow:4px 3px 3px -1px rgba(0,0,0,0.3)"></div>
<div class="a" style="left:619px;top:216px;width:364px;height:252px;background:#3fc3ee;border-radius:4px 4px 0 0"></div>
<div class="a" style="left:619px;top:240px;width:2px;height:227px;background:#c9e6f7"></div>
<div class="a" style="left:621px;top:466px;width:361px;height:1px;background:#bfe6f8"></div>
<div class="a" style="left:619px;top:216px;width:364px;height:24px;background:linear-gradient(#97b3d1,#bfd5ec);border-radius:4px 4px 0 0;border-top:1px solid #eef4fb"></div>
<div class="a" style="left:621px;top:240px;width:360px;height:226px;background:#333"></div>
<div class="a" style="left:625px;top:222px;font-size:12px;line-height:14px;color:#000">Rotate</div>
<div class="a" style="left:637px;top:269px;width:328px;height:93px;border:1px solid #1e1e1e;box-shadow:1px 1px 0 #3e3e3e inset, 1px 1px 0 #3e3e3e"></div>
<div class="a" style="left:644px;top:262px;padding:0 3px;background:#333;font-size:12px;line-height:14px;color:#dcdcdc">Rotate</div>
<div class="a" style="left:659px;top:298px;font-size:12px;line-height:14px;color:#dcdcdc">Angle:</div>
<svg class="a" style="left:697px;top:287px" width="36" height="36"><circle cx="18" cy="18" r="16" fill="#383838" stroke="#e0862a" stroke-width="1.1"/><path d="M18 18 L25.5 4.5" stroke="#111" stroke-width="1"/><circle cx="18" cy="18" r="0.9" fill="#e0862a"/></svg>
<div class="a" style="left:732px;top:283px;width:70px;height:41px;border:5.5px solid #ff6a00"></div>
<div class="a" style="left:738px;top:295px;width:59px;height:20px;background:#b9b9b9;border:1px solid #e0862a;box-shadow:inset 1px 1px 0 #2a2a2a"></div>
<div class="a" style="left:743px;top:298px;font-size:13px;line-height:14px;color:#111">60°</div>
<div class="a" style="left:764px;top:298px;width:1px;height:14px;background:#111"></div>
<div class="a" style="left:647px;top:333px;font-size:12px;line-height:14px;color:#dcdcdc">Options:</div>
<div class="a" style="left:698px;top:334px;width:13px;height:13px;background:#383838;border:1px solid #2a2a2a"></div>
<svg class="a" style="left:698px;top:334px" width="13" height="13"><path d="M2.5 6.5 L5 9.5 L10.5 2.5" stroke="#7c7c7c" stroke-width="1.8" fill="none"/></svg>
<div class="a" style="left:715px;top:333px;font-size:12px;line-height:14px;color:#7a7a7a;letter-spacing:0.1px">Transform Objects</div>
<div class="a" style="left:831px;top:334px;width:12px;height:12px;background:#2e2e2e;border:1px solid #262626;box-shadow:inset 0 0 0 1px #3a3a3a"></div>
<div class="a" style="left:848px;top:333px;font-size:12px;line-height:14px;color:#7a7a7a">Transform Patterns</div>
<div class="a" style="left:637px;top:374px;width:13px;height:12px;background:#2e2e2e;border:1px solid #262626"></div>
<svg class="a" style="left:637px;top:372px" width="14" height="14"><path d="M2.5 7.5 L5.5 11 L11.5 3" stroke="#e6e6e6" stroke-width="1.7" fill="none"/></svg>
<div class="a" style="left:654px;top:373px;font-size:12px;line-height:14px;color:#dcdcdc">Preview</div>
<div class="a" style="left:637px;top:411px;width:90px;height:24px;background:linear-gradient(#444,#3b3b3b);border:1px solid #222;box-shadow:inset 0 1px 0 #4c4c4c"></div>
<div class="a" style="left:637px;top:416px;width:90px;text-align:center;font-size:12px;line-height:14px;color:#dcdcdc">Copy</div>
<div class="a" style="left:876px;top:411px;width:90px;height:24px;background:linear-gradient(#444,#3b3b3b);border:1px solid #222;box-shadow:inset 0 1px 0 #4c4c4c"></div>
<div class="a" style="left:876px;top:416px;width:90px;text-align:center;font-size:12px;line-height:14px;color:#dcdcdc">Cancel</div>
<div class="a" style="left:767px;top:400px;width:111px;height:44px;border:5.5px solid #ff6a00"></div>
<div class="a" style="left:773px;top:405px;width:99px;height:33px;background:#2b2e33"></div>
<div class="a" style="left:776px;top:409px;width:94px;height:28px;background:#1c1c1c"></div>
<div class="a" style="left:778px;top:411px;width:90px;height:24px;background:linear-gradient(#474747,#3a3a3a)"></div>
<div class="a" style="left:778px;top:416px;width:90px;text-align:center;font-size:12px;line-height:14px;color:#dcdcdc">OK</div>

<!-- Status bar -->
<div class="a" style="left:1px;top:578px;width:785px;height:18px;background:#2a2a2a"></div>
<div class="a" style="left:4px;top:579px;width:1px;height:16px;background:#1c1c1c"></div>
<div class="a" style="left:9px;top:580px;width:58px;height:16px;background:#222"></div>
<div class="a" style="left:10px;top:581px;width:41px;height:14px;background:#b9b9b9"></div>
<div class="a" style="left:13px;top:584px;font-size:10px;line-height:10px;color:#111">1200%</div>
<div class="a" style="left:52px;top:581px;width:14px;height:14px;background:#3c3c3c"></div>
<div class="a tri" style="left:55px;top:586px;border-top-color:#e8e8e8"></div>
<div class="a" style="left:67px;top:580px;width:41px;height:16px;background:#2e2e2e"></div>
<svg class="a" style="left:73px;top:583px" width="30" height="10"><rect x="1" y="0.5" width="1.5" height="8" fill="#666"/><path d="M9 0.5 L3 4.5 L9 8.5 Z M25 0.5 L20 4.5 L25 8.5 Z" fill="#666"/></svg>
<div class="a" style="left:109px;top:580px;width:58px;height:16px;background:#222"></div>
<div class="a" style="left:110px;top:581px;width:41px;height:14px;background:#b9b9b9"></div>
<div class="a" style="left:114px;top:583px;font-size:11px;line-height:11px;color:#111">1</div>
<div class="a" style="left:152px;top:581px;width:14px;height:14px;background:#3c3c3c"></div>
<div class="a tri" style="left:155px;top:586px;border-top-color:#e8e8e8"></div>
<div class="a" style="left:167px;top:580px;width:41px;height:16px;background:#2e2e2e"></div>
<svg class="a" style="left:175px;top:583px" width="30" height="10"><path d="M2 0.5 L7 4.5 L2 8.5 Z M17 0.5 L23 4.5 L17 8.5 Z" fill="#666"/><rect x="23.5" y="0.5" width="1.5" height="8" fill="#666"/></svg>
<div class="a" style="left:209px;top:580px;width:200px;height:16px;background:#2e2e2e;border:1px solid #262626"></div>
<div class="a" style="left:289px;top:584px;font-size:10px;line-height:10px;color:#d0d0d0">Selection</div>
<div class="a" style="left:409px;top:580px;width:19px;height:16px;background:#383838"></div>
<svg class="a" style="left:414px;top:583px" width="8" height="10"><path d="M2 0.5 L7 4.8 L2 9 Z" fill="#bbb"/></svg>
<div class="a" style="left:428px;top:579px;width:342px;height:16px;background:#222"></div>
<svg class="a" style="left:431px;top:583px" width="10" height="10"><path d="M8 0.5 L2 4.8 L8 9 Z" fill="#ddd"/></svg>
<div class="a" style="left:590px;top:580px;width:15px;height:15px;background:#8a8a8a"></div>
<svg class="a" style="left:757px;top:583px" width="10" height="10"><path d="M1 0.5 L7.5 4.8 L1 9 Z" fill="#ddd"/></svg>
<div class="a" style="left:770px;top:579px;width:16px;height:16px;background:#383838"></div>
<div class="a" style="left:0;top:595px;width:1024px;height:5px;background:#262626"></div>

</body></html>
